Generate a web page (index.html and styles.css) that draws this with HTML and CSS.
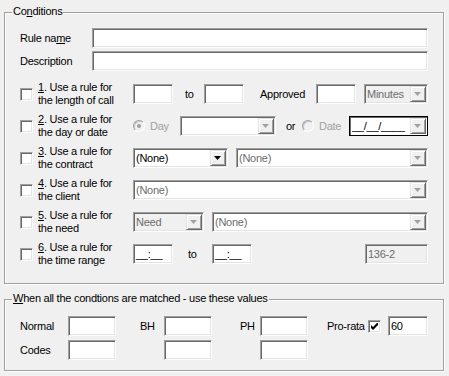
FILE: index.html
```html
<!DOCTYPE html>
<html lang="en">
<head>
  <meta charset="UTF-8">
  <meta name="viewport" content="width=device-width, initial-scale=1.0">
  <title>Rule Conditions</title>
  <link rel="stylesheet" href="styles.css">
</head>
<body>
  <div class="dialog">
    <div class="group conditions">
      <span class="legend">Co<u>n</u>ditions</span>

      <div class="field">
        <label>Rule na<u>m</u>e</label>
        <div class="edit"></div>
      </div>
      <div class="field">
        <label>Description</label>
        <div class="edit"></div>
      </div>

      <div class="rule first">
        <span class="check"></span>
        <span class="rule-text"><u>1</u>. Use a rule for<br>the length of call</span>
        <div class="edit w40"></div>
        <span class="to">to</span>
        <div class="edit w40"></div>
        <span class="approved">Approved</span>
        <div class="edit w40"></div>
        <div class="combo off minutes"><span class="value">Minutes</span><span class="drop"></span></div>
      </div>

      <div class="rule">
        <span class="check"></span>
        <span class="rule-text"><u>2</u>. Use a rule for<br>the day or date</span>
        <span class="radio checked"></span>
        <span class="opt-label">Day</span>
        <div class="combo muted day"><span class="value"></span><span class="drop"></span></div>
        <span class="or">or</span>
        <span class="radio"></span>
        <span class="opt-label">Date</span>
        <div class="combo date"><span class="value">__/__/____</span><span class="drop"></span></div>
      </div>

      <div class="rule">
        <span class="check"></span>
        <span class="rule-text"><u>3</u>. Use a rule for<br>the contract</span>
        <div class="combo active w95"><span class="value">(None)</span><span class="drop"></span></div>
        <div class="combo muted grow spaced"><span class="value">(None)</span><span class="drop"></span></div>
      </div>

      <div class="rule">
        <span class="check"></span>
        <span class="rule-text"><u>4</u>. Use a rule for<br>the client</span>
        <div class="combo muted grow"><span class="value">(None)</span><span class="drop"></span></div>
      </div>

      <div class="rule">
        <span class="check"></span>
        <span class="rule-text"><u>5</u>. Use a rule for<br>the need</span>
        <div class="combo off w71"><span class="value">Need</span><span class="drop"></span></div>
        <div class="combo muted grow spaced"><span class="value">(None)</span><span class="drop"></span></div>
      </div>

      <div class="rule">
        <span class="check"></span>
        <span class="rule-text"><u>6</u>. Use a rule for<br>the time range</span>
        <div class="edit w40">__:__</div>
        <span class="to wide">to</span>
        <div class="edit w40">__:__</div>
        <div class="edit off code">136-2</div>
      </div>
    </div>

    <div class="group values">
      <span class="legend"><u>W</u>hen all the condtions are matched - use these values</span>
      <div class="values-grid">
        <label>Normal</label>
        <div class="edit"></div>
        <label class="bh">BH</label>
        <div class="edit"></div>
        <label class="ph">PH</label>
        <div class="edit"></div>
        <div class="prorata">
          <span class="prorata-label">Pro-rata</span>
          <span class="check on">
            <svg width="7" height="7" viewBox="0 0 7 7"><path d="M0 2L2 4L7 -1V2L2 7L0 5Z" fill="#000"/></svg>
          </span>
          <div class="edit w40 ratio">60</div>
        </div>

        <label>Codes</label>
        <div class="edit"></div>
        <div class="edit col4"></div>
        <div class="edit col6"></div>
      </div>
    </div>
  </div>
</body>
</html>
```

FILE: styles.css
```css
* {
  box-sizing: border-box;
}
body {
  margin: 0;
  width: 449px;
  height: 376px;
  overflow: hidden;
  background: #f0f0f0;
  font-family: "Liberation Sans", Arial, sans-serif;
  font-size: 11px;
  line-height: 13px;
  letter-spacing: -0.25px;
  color: #000;
}
u {
  text-decoration-thickness: 1px;
  text-underline-offset: 1px;
}
.dialog {
  padding: 12px 0 0 4px;
}

/* etched group boxes */
.group {
  position: relative;
  width: 440px;
  border: 1px solid #a0a0a0;
  box-shadow: inset 1px 1px 0 #fff, 1px 1px 0 #fff;
}
.conditions {
  height: 272px;
  padding: 15px 15px 0 15px;
}
.values {
  height: 72px;
  margin-top: 15px;
  padding: 16px 15px 0 15px;
}
.legend {
  position: absolute;
  top: -8px;
  left: 7px;
  padding: 0 1px;
  background: #f0f0f0;
  white-space: nowrap;
}

/* sunken controls */
.edit,
.combo {
  height: 20px;
  display: flex;
  align-items: center;
  padding: 0 2px;
  background: #fff;
  border: 1px solid;
  border-color: #a0a0a0 #fff #fff #a0a0a0;
  box-shadow: inset 1px 1px 0 #696969, inset -1px -1px 0 #e3e3e3;
  white-space: nowrap;
  overflow: hidden;
}
.edit.off,
.combo.off {
  background: #f0f0f0;
  color: #6d6d6d;
}
.combo.muted {
  color: #6d6d6d;
}
.combo {
  padding-right: 1px;
}
.combo .value {
  flex: 1;
  min-width: 0;
  overflow: hidden;
}
.drop {
  position: relative;
  flex: none;
  width: 16px;
  height: 16px;
  background: #f0f0f0;
  border: 1px solid;
  border-color: #e3e3e3 #696969 #696969 #e3e3e3;
  box-shadow: inset 1px 1px 0 #fff, inset -1px -1px 0 #a0a0a0;
}
.drop::after {
  content: "";
  position: absolute;
  left: 3px;
  top: 5px;
  width: 7px;
  height: 4px;
  background: #a0a0a0;
  clip-path: polygon(0 0, 100% 0, 50% 100%);
}
.combo.active .drop::after {
  background: #000;
}
.combo.date {
  border: 1px solid #000;
  box-shadow: inset 1px 1px 0 #696969;
  color: #000;
}

.check {
  position: relative;
  flex: none;
  width: 13px;
  height: 13px;
  background: #fff;
  border: 1px solid;
  border-color: #a0a0a0 #fff #fff #a0a0a0;
  box-shadow: inset 1px 1px 0 #696969, inset -1px -1px 0 #e3e3e3;
}
.check svg {
  position: absolute;
  left: 2px;
  top: 2px;
}
.radio {
  position: relative;
  flex: none;
  width: 12px;
  height: 12px;
  border-radius: 50%;
  border: 1px solid;
  border-color: #a0a0a0 #fff #fff #a0a0a0;
  background: #f0f0f0;
  box-shadow: inset 1px 1px 0 #c8c8c8;
}
.radio.checked::after {
  content: "";
  position: absolute;
  left: 3px;
  top: 3px;
  width: 4px;
  height: 4px;
  border-radius: 50%;
  background: #a0a0a0;
}

/* top fields */
.field {
  display: grid;
  grid-template-columns: 72px 1fr;
  align-items: center;
  height: 20px;
}
.field + .field {
  margin-top: 3px;
}

/* rule rows */
.rule {
  display: flex;
  align-items: center;
  height: 26px;
  margin-top: 6px;
}
.rule.first {
  margin-top: 10px;
}
.rule-text {
  flex: none;
  width: 95px;
  margin-left: 5px;
  white-space: nowrap;
}
.w40 {
  flex: none;
  width: 40px;
}
.w71 {
  flex: none;
  width: 71px;
}
.w95 {
  flex: none;
  width: 95px;
}
.grow {
  flex: 1;
}
.spaced {
  margin-left: 8px;
}
.to {
  flex: none;
  width: 19px;
  margin-left: 12px;
}
.to.wide {
  width: 24px;
  margin-left: 15px;
}
.approved {
  flex: none;
  width: 56px;
  margin-left: 16px;
}
.minutes {
  flex: none;
  width: 64px;
  margin-left: 8px;
}
.opt-label {
  flex: none;
  width: 30px;
  margin-left: 5px;
  color: #a0a0a0;
}
.day {
  flex: none;
  width: 96px;
}
.or {
  flex: none;
  width: 16px;
  margin-left: 10px;
}
.date {
  flex: none;
  width: 79px;
}
.code {
  flex: none;
  width: 63px;
  margin-left: auto;
}

/* values group */
.values-grid {
  display: grid;
  grid-template-columns: repeat(6, 48px) 1fr;
  grid-auto-rows: 20px;
  row-gap: 4px;
  align-items: center;
}
.values-grid .edit {
  height: 20px;
}
.bh {
  padding-left: 24px;
}
.ph {
  padding-left: 28px;
}
.col4 {
  grid-column: 4;
}
.col6 {
  grid-column: 6;
}
.prorata {
  display: flex;
  align-items: center;
  margin-left: 19px;
}
.prorata-label {
  width: 41px;
}
.ratio {
  margin-left: 7px;
}
```
